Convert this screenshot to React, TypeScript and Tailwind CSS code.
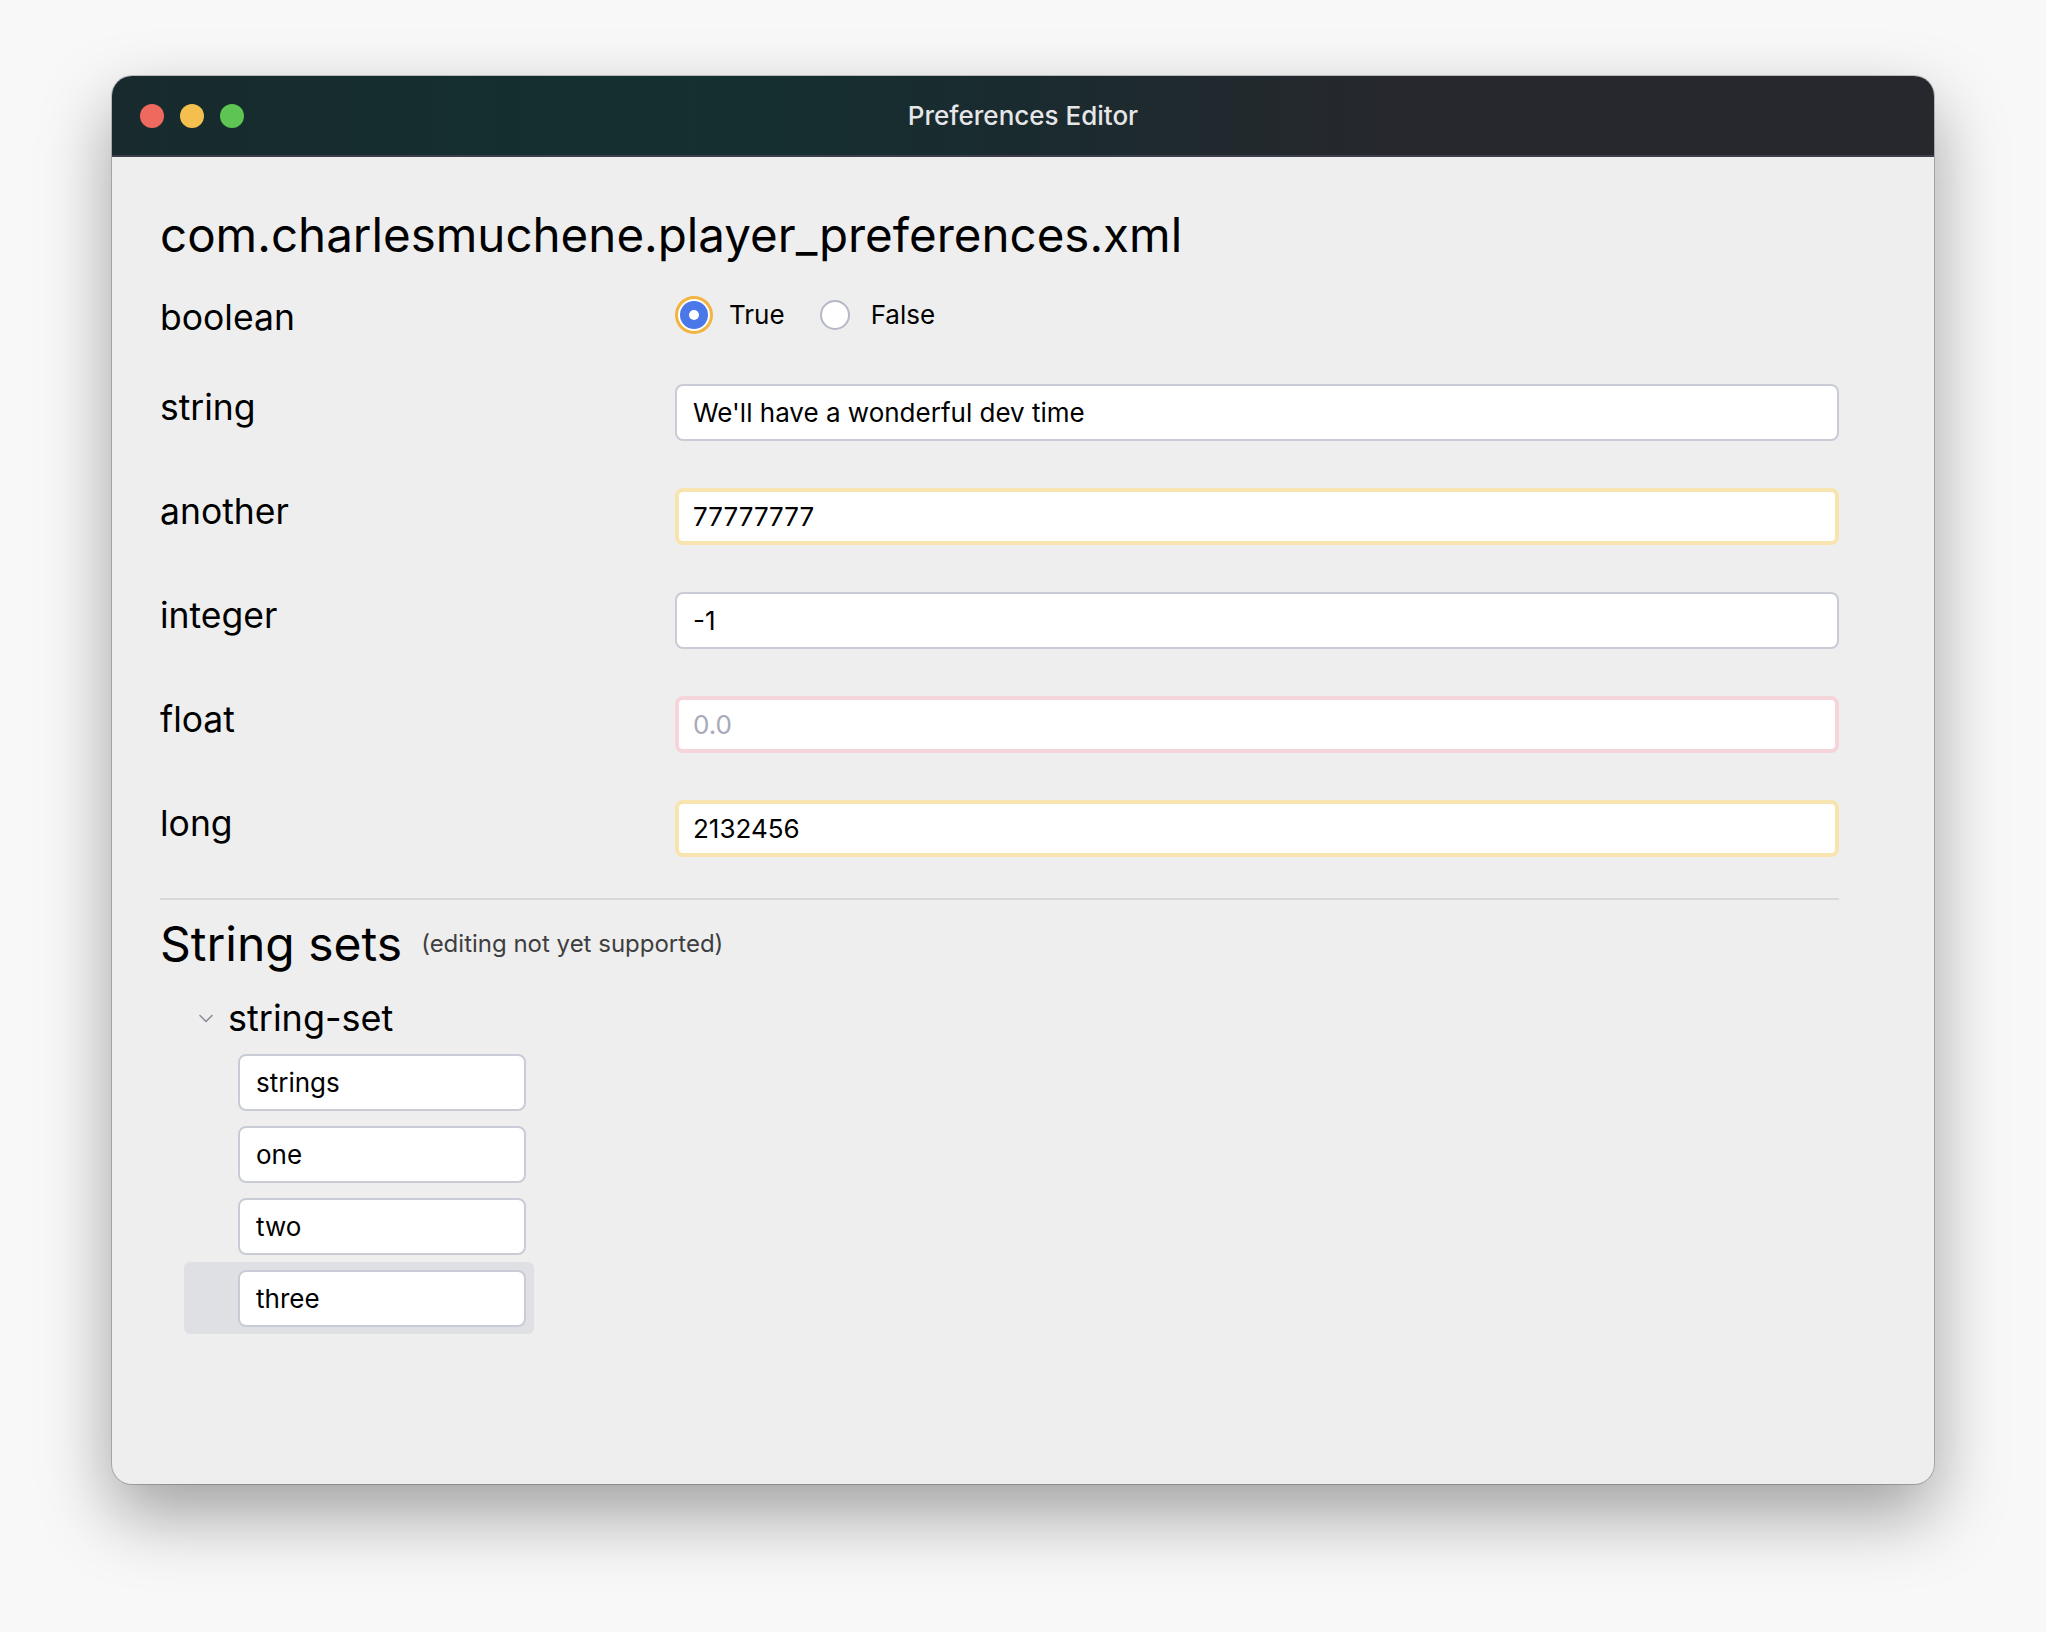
import React from 'react'

type Tone = 'normal' | 'warning' | 'error'

const fields: { name: string; value: string; placeholder?: string; tone: Tone }[] = [
  { name: 'string', value: "We'll have a wonderful dev time", tone: 'normal' },
  { name: 'another', value: '77777777', tone: 'warning' },
  { name: 'integer', value: '-1', tone: 'normal' },
  { name: 'float', value: '', placeholder: '0.0', tone: 'error' },
  { name: 'long', value: '2132456', tone: 'warning' },
]

const stringSet = ['strings', 'one', 'two', 'three']

const toneClass: Record<Tone, string> = {
  normal: 'border-2 border-[#c9ccd6] pl-[16px]',
  warning: 'border-4 border-[#f8e4ae] pl-[14px]',
  error: 'border-4 border-[#f5d5d9] pl-[14px]',
}

export default function App() {
  return (
    <div className="min-h-screen w-full bg-[#f8f8f8] pt-[76px] font-['Inter','Noto_Sans',sans-serif]">
      <div className="mx-auto flex h-[1408px] w-[1822px] flex-col overflow-hidden rounded-[20px] bg-[#eeeeee] shadow-[0_0_0_1px_rgba(0,0,0,0.2),0_30px_70px_rgba(0,0,0,0.36)]">
        <TitleBar />
        <div className="flex flex-col pt-[50px] pl-[48px] pr-[95px] text-black">
          <h1 className="text-[47.5px] leading-[56px]">
            com.charlesmuchene.player_preferences.xml
          </h1>

          <div className="mt-[34px] flex flex-col gap-[47px]">
            <div className="flex h-[40px] items-center">
              <Label top={false}>boolean</Label>
              <RadioGroup />
            </div>
            {fields.map(field => (
              <div key={field.name} className="flex items-start">
                <Label>{field.name}</Label>
                <TextField {...field} />
              </div>
            ))}
          </div>

          <div className="mt-[41px] h-[2px] bg-[#d9d9dc]" />

          <div className="mt-[16px] flex items-center gap-[19px]">
            <h2 className="text-[48px] leading-[56px]">String sets</h2>
            <span className="text-[24px] text-[#3e3e40]">
              (editing not yet supported)
            </span>
          </div>

          <StringSetTree />
        </div>
      </div>
    </div>
  )
}

function TitleBar() {
  return (
    <div className="relative flex h-[81px] shrink-0 items-center border-b-2 border-[#3c3f4b] bg-[linear-gradient(90deg,#182a2e_0%,#13302f_30%,#1a2b2f_50%,#26282d_70%,#27282d_100%)]">
      <div className="flex gap-[16px] pl-[28px]">
        <span className="h-[24px] w-[24px] rounded-full bg-[#ee6a5f]" />
        <span className="h-[24px] w-[24px] rounded-full bg-[#f5bf4f]" />
        <span className="h-[24px] w-[24px] rounded-full bg-[#5ec454]" />
      </div>
      <div className="absolute inset-0 flex items-center justify-center text-[26px] font-medium text-[#e6e6e8]">
        Preferences Editor
      </div>
    </div>
  )
}

function Label({
  children,
  top = true,
}: {
  children: React.ReactNode
  top?: boolean
}) {
  return (
    <div
      className={`w-[515px] shrink-0 text-[35.5px] leading-[40px] ${
        top ? 'pt-[4px]' : 'pt-[2px]'
      }`}
    >
      {children}
    </div>
  )
}

function RadioGroup() {
  return (
    <div className="mb-[5px] flex items-center text-[26px]">
      <span className="flex h-[38px] w-[38px] items-center justify-center rounded-full bg-[#f2b33f] p-[3px]">
        <span className="flex h-[32px] w-[32px] items-center justify-center rounded-full bg-white p-[2px]">
          <span className="flex h-[28px] w-[28px] items-center justify-center rounded-full bg-[#4a78e8]">
            <span className="h-[10px] w-[10px] rounded-full bg-white" />
          </span>
        </span>
      </span>
      <span className="ml-[16px]">True</span>
      <span className="ml-[35px] h-[30px] w-[30px] rounded-full border-2 border-[#b5b9c7] bg-white" />
      <span className="ml-[21px]">False</span>
    </div>
  )
}

function TextField({
  value,
  placeholder,
  tone,
}: {
  value: string
  placeholder?: string
  tone: Tone
}) {
  return (
    <div
      className={`flex h-[57px] flex-1 items-center rounded-[8px] bg-white text-[26px] ${toneClass[tone]}`}
    >
      {value ? (
        <span>{value}</span>
      ) : (
        <span className="text-[#a6aab9]">{placeholder}</span>
      )}
    </div>
  )
}

function StringSetTree() {
  return (
    <div className="ml-[24px] mt-[24px] flex flex-col">
      <div className="flex h-[44px] items-center">
        <span className="flex w-[44px] justify-center">
          <svg width="14" height="9" viewBox="0 0 14 9" fill="none">
            <polyline
              points="1,1.5 7,7.5 13,1.5"
              stroke="#8b8e99"
              strokeWidth="1.6"
              strokeLinecap="round"
              strokeLinejoin="round"
            />
          </svg>
        </span>
        <span className="text-[36px] leading-[44px]">string-set</span>
      </div>
      <div className="mt-[6px] flex flex-col">
        {stringSet.map((item, i) => {
          const selected = i === stringSet.length - 1
          return (
            <div
              key={item}
              className={`w-fit rounded-[6px] pt-[8px] pb-[7px] pl-[54px] pr-[8px] ${
                selected ? 'bg-[#dfe0e4]' : ''
              }`}
            >
              <div className="flex h-[57px] w-[288px] items-center rounded-[8px] border-2 border-[#c9ccd6] bg-white pl-[16px] text-[26px]">
                {item}
              </div>
            </div>
          )
        })}
      </div>
    </div>
  )
}
